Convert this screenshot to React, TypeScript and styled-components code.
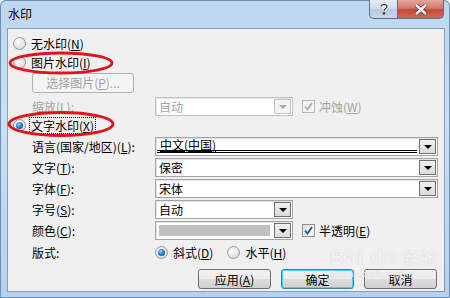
import React from 'react';
import styled, { createGlobalStyle, css } from 'styled-components';

const GlobalStyle = createGlobalStyle`
  html, body {
    margin: 0;
    padding: 0;
    background: #ffffff;
  }
  body {
    font-family: "Noto Sans CJK SC", "Liberation Sans", sans-serif;
    font-size: 12px;
    color: #000;
  }
`;

const Window = styled.div`
  position: relative;
  width: 450px;
  height: 298px;
  box-sizing: border-box;
  padding: 0 5px 6px 7px;
  border-radius: 6px 6px 0 0;
  background: linear-gradient(180deg, #bcd7f1 0%, #c9e0f6 40%, #b4d1ee 100%);
  box-shadow: inset 0 0 0 1px #6f8fb4;
  display: flex;
  flex-direction: column;
  overflow: hidden;
`;

const TitleBar = styled.div`
  height: 28px;
  display: flex;
  align-items: flex-start;
  justify-content: space-between;
`;

const Title = styled.span`
  margin-top: 6px;
  margin-left: 1px;
  font-size: 12px;
  line-height: 16px;
`;

const Caption = styled.div`
  display: flex;
  margin-right: 1px;
`;

const CapButton = styled.div<{ $close?: boolean }>`
  height: 19px;
  box-sizing: border-box;
  display: flex;
  align-items: center;
  justify-content: center;
  border: 1px solid #5d6e86;
  border-top: none;
  ${(p) =>
    p.$close
      ? css`
          width: 47px;
          border-radius: 0 0 5px 0;
          background: linear-gradient(180deg, #e3a69c 0%, #d2786a 45%, #c24a38 55%, #cf6b55 100%);
        `
      : css`
          width: 28px;
          border-right: none;
          border-radius: 0 0 0 5px;
          background: linear-gradient(180deg, #e6eef7 0%, #cfdceb 45%, #b8cadf 55%, #c9d8ea 100%);
        `}
`;

const Panel = styled.div`
  position: relative;
  flex: 1;
  background: #f0f0f0;
  border: 1px solid #8a9db5;
  padding: 5px 0 0 0;
  display: flex;
  flex-direction: column;
`;

const RadioRow = styled.label<{ $indent?: number }>`
  height: 19px;
  display: flex;
  align-items: center;
  padding-left: ${(p) => p.$indent ?? 5}px;
  gap: 5px;
`;

const RadioDot = styled.span<{ $on?: boolean }>`
  width: 13px;
  height: 13px;
  box-sizing: border-box;
  border-radius: 50%;
  border: 1px solid #8f9aa6;
  background: radial-gradient(circle at 40% 35%, #ffffff 0%, #e3e3e3 60%, #c9c9c9 100%);
  display: flex;
  align-items: center;
  justify-content: center;
  flex: none;
  &::after {
    content: '';
    display: ${(p) => (p.$on ? 'block' : 'none')};
    width: 7px;
    height: 7px;
    border-radius: 50%;
    background: radial-gradient(circle at 40% 35%, #8fd2ff 0%, #1e7ccc 50%, #0c3f77 100%);
  }
`;

const Text = styled.span<{ $dim?: boolean; $focus?: boolean }>`
  line-height: 15px;
  white-space: nowrap;
  color: ${(p) => (p.$dim ? '#a3a3a3' : '#000')};
  ${(p) =>
    p.$focus &&
    css`
      outline: 1px dotted #000;
      outline-offset: 0;
      padding: 0 1px;
      margin-left: -1px;
    `}
  u {
    text-decoration: underline;
  }
`;

const PushButton = styled.div<{ $dim?: boolean; $default?: boolean; $w?: number }>`
  width: ${(p) => p.$w ?? 73}px;
  height: 20px;
  box-sizing: border-box;
  border-radius: 3px;
  display: flex;
  align-items: center;
  justify-content: center;
  border: 1px solid ${(p) => (p.$dim ? '#adb2b5' : p.$default ? '#3c7fb1' : '#707070')};
  color: ${(p) => (p.$dim ? '#a3a3a3' : '#000')};
  background: ${(p) =>
    p.$dim
      ? '#f4f4f4'
      : 'linear-gradient(180deg, #f2f2f2 0%, #ebebeb 48%, #dddddd 52%, #cfcfcf 100%)'};
  ${(p) =>
    p.$default &&
    css`
      box-shadow: inset 0 0 0 1px #48d1f8;
    `}
`;

const ButtonLine = styled.div`
  height: 21px;
  padding-left: 24px;
  display: flex;
  align-items: center;
`;

const FieldRow = styled.div<{ $gap?: number }>`
  height: 19px;
  margin-top: ${(p) => p.$gap ?? 2}px;
  display: flex;
  align-items: center;
  padding-left: 24px;
`;

const Label = styled.span<{ $dim?: boolean }>`
  width: 123px;
  flex: none;
  white-space: nowrap;
  color: ${(p) => (p.$dim ? '#a3a3a3' : '#000')};
  u {
    text-decoration: underline;
  }
`;

const Combo = styled.div<{ $w: number; $dim?: boolean }>`
  width: ${(p) => p.$w}px;
  height: 100%;
  box-sizing: border-box;
  border: 1px solid ${(p) => (p.$dim ? '#c2c2c2' : '#a5a5a5')};
  box-shadow: inset 1px 1px 0 #e3e3e3;
  background: #fff;
  display: flex;
  align-items: stretch;
  flex: none;
`;

const ComboValue = styled.div<{ $dim?: boolean; $double?: boolean }>`
  flex: 1;
  padding-left: 3px;
  display: flex;
  align-items: center;
  color: ${(p) => (p.$dim ? '#a3a3a3' : '#000')};
  ${(p) =>
    p.$double &&
    css`
      margin: 0 1px 2px 1px;
      border-bottom: 3px double #000;
      text-decoration: underline;
    `}
`;

const Swatch = styled.div`
  flex: 1;
  margin: 3px 3px;
  background: #c0c0c0;
`;

const Drop = styled.div<{ $dim?: boolean }>`
  width: 17px;
  margin: 1px;
  box-sizing: border-box;
  border: 1px solid ${(p) => (p.$dim ? '#c4c4c4' : '#707070')};
  background: ${(p) => (p.$dim ? '#f4f4f4' : 'linear-gradient(180deg, #f0f0f0, #dcdcdc)')};
  display: flex;
  align-items: center;
  justify-content: center;
  &::after {
    content: '';
    border-left: 4px solid transparent;
    border-right: 4px solid transparent;
    border-top: 4px solid ${(p) => (p.$dim ? '#a8a8a8' : '#000')};
  }
`;

const Check = styled.span<{ $dim?: boolean }>`
  margin-left: 9px;
  margin-right: 4px;
  width: 13px;
  height: 13px;
  box-sizing: border-box;
  border: 1px solid ${(p) => (p.$dim ? '#b8b8b8' : '#8e8f8f')};
  background: ${(p) => (p.$dim ? '#f4f4f4' : 'linear-gradient(135deg, #dcdcdc, #ffffff)')};
  display: flex;
  align-items: center;
  justify-content: center;
  flex: none;
`;

const Footer = styled.div`
  margin-top: 7px;
  display: flex;
  justify-content: flex-end;
  gap: 10px;
  padding-right: 7px;
`;

const Ellipse = styled.svg`
  position: absolute;
  left: 0;
  top: 0;
  pointer-events: none;
`;

const Watermark = styled.div`
  position: absolute;
  left: 322px;
  top: 218px;
  color: rgba(255, 255, 255, 0.75);
  text-shadow: 0 0 1px rgba(160, 160, 160, 0.55);
  font-family: "Liberation Sans", sans-serif;
  line-height: 1;
  pointer-events: none;
`;

const WmBig = styled.div`
  font-size: 20px;
  font-weight: bold;
  letter-spacing: 1px;
  span {
    font-family: "Noto Sans CJK SC", sans-serif;
    font-size: 16px;
  }
`;

const WmSmall = styled.div`
  font-size: 9px;
  margin-top: 3px;
`;

const tick = (color: string) => (
  <svg width="9" height="9" viewBox="0 0 9 9">
    <path d="M1 4.5 L3.5 7.5 L8 1" fill="none" stroke={color} strokeWidth="1.8" />
  </svg>
);

export default function App() {
  return (
    <>
      <GlobalStyle />
      <Window>
        <TitleBar>
          <Title>水印</Title>
          <Caption>
            <CapButton>
              <svg width="10" height="12" viewBox="0 0 10 12">
                <path d="M2 3.5 C2 1 8 1 8 3.5 C8 5.5 5 5.5 5 8" fill="none" stroke="#fff" strokeWidth="3" />
                <path d="M2 3.5 C2 1 8 1 8 3.5 C8 5.5 5 5.5 5 8" fill="none" stroke="#333" strokeWidth="1.2" />
                <rect x="3.8" y="9.3" width="2.4" height="2.2" fill="#333" />
              </svg>
            </CapButton>
            <CapButton $close>
              <svg width="14" height="11" viewBox="0 0 14 11">
                <path d="M2 1 L12 10 M12 1 L2 10" stroke="#5a2a22" strokeWidth="4" />
                <path d="M2 1 L12 10 M12 1 L2 10" stroke="#fff" strokeWidth="2.4" />
              </svg>
            </CapButton>
          </Caption>
        </TitleBar>
        <Panel>
          <RadioRow>
            <RadioDot />
            <Text>无水印(<u>N</u>)</Text>
          </RadioRow>
          <RadioRow>
            <RadioDot />
            <Text>图片水印(<u>I</u>)</Text>
          </RadioRow>
          <ButtonLine>
            <PushButton $dim $w={102}>选择图片(<u>P</u>)...</PushButton>
          </ButtonLine>
          <FieldRow $gap={4}>
            <Label $dim>缩放(<u>L</u>):</Label>
            <Combo $w={138} $dim>
              <ComboValue $dim>自动</ComboValue>
              <Drop $dim />
            </Combo>
            <Check $dim>{tick('#b0b0b0')}</Check>
            <Text $dim>冲蚀(<u>W</u>)</Text>
          </FieldRow>
          <RadioRow>
            <RadioDot $on />
            <Text $focus>文字水印(<u>X</u>)</Text>
          </RadioRow>
          <FieldRow>
            <Label>语言(国家/地区)(<u>L</u>):</Label>
            <Combo $w={283}>
              <ComboValue $double>中文(中国)</ComboValue>
              <Drop />
            </Combo>
          </FieldRow>
          <FieldRow>
            <Label>文字(<u>T</u>):</Label>
            <Combo $w={283}>
              <ComboValue>保密</ComboValue>
              <Drop />
            </Combo>
          </FieldRow>
          <FieldRow>
            <Label>字体(<u>F</u>):</Label>
            <Combo $w={283}>
              <ComboValue>宋体</ComboValue>
              <Drop />
            </Combo>
          </FieldRow>
          <FieldRow>
            <Label>字号(<u>S</u>):</Label>
            <Combo $w={138}>
              <ComboValue>自动</ComboValue>
              <Drop />
            </Combo>
          </FieldRow>
          <FieldRow>
            <Label>颜色(<u>C</u>):</Label>
            <Combo $w={138}>
              <Swatch />
              <Drop />
            </Combo>
            <Check>{tick('#2b4d8f')}</Check>
            <Text>半透明(<u>E</u>)</Text>
          </FieldRow>
          <FieldRow $gap={3}>
            <Label>版式:</Label>
            <RadioRow $indent={0}>
              <RadioDot $on />
              <Text>斜式(<u>D</u>)</Text>
            </RadioRow>
            <RadioRow $indent={14}>
              <RadioDot />
              <Text>水平(<u>H</u>)</Text>
            </RadioRow>
          </FieldRow>
          <Footer>
            <PushButton>应用(<u>A</u>)</PushButton>
            <PushButton $default>确定</PushButton>
            <PushButton>取消</PushButton>
          </Footer>
          <Watermark>
            <WmBig>
              Bai du <span>经验</span>
            </WmBig>
            <WmSmall>jingyan.baidu.com</WmSmall>
          </Watermark>
        </Panel>
        <Ellipse width="450" height="298" viewBox="0 0 450 298">
          <ellipse cx="61" cy="63" rx="51" ry="10" fill="none" stroke="#e3121b" strokeWidth="2.8" />
          <ellipse cx="61" cy="124" rx="52" ry="11.5" fill="none" stroke="#e3121b" strokeWidth="2.8" />
        </Ellipse>
      </Window>
    </>
  );
}
